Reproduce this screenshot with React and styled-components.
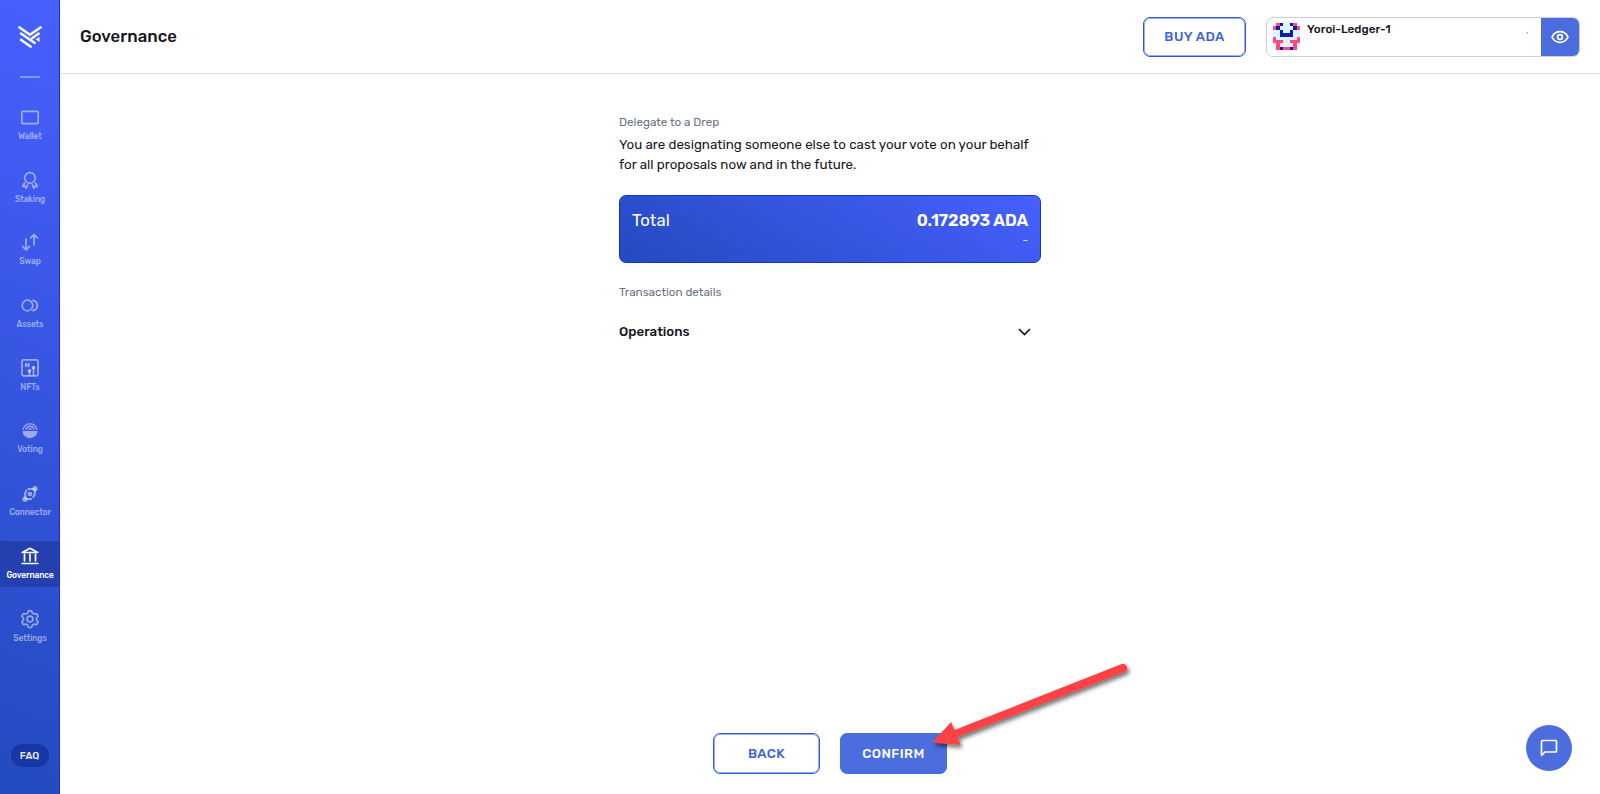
import React from 'react'
import styled, { createGlobalStyle, css } from 'styled-components'

const blue = '#4b6dde'
const outline = '#2f59d6'

const GlobalStyle = createGlobalStyle`
* {
  box-sizing: border-box;
}
body {
  margin: 0;
  background: #fff;
  color: #15161f;
  font-family: Rubik, Roboto, "Liberation Sans", sans-serif;
}
button {
  font-family: inherit;
  padding: 0;
  cursor: pointer;
}
h1, p {
  margin: 0;
}
svg {
  display: block;
}
`

const Layout = styled.div`
display: flex;
height: 794px;
overflow: hidden;
`

const Sidebar = styled.aside`
display: flex;
flex-direction: column;
align-items: center;
flex: none;
width: 60px;
padding: 24px 0 27px;
border-right: 1px solid #1230cf;
background: linear-gradient(20deg, #244abf 0%, #4760ff 100%);
`

const Divider = styled.div`
width: 20px;
height: 2px;
margin-top: 27px;
background: rgba(255, 255, 255, 0.36);
`

const NavList = styled.nav`
display: flex;
flex-direction: column;
gap: 16.2px;
width: 100%;
margin-top: 24px;
`

const NavItem = styled.a`
display: flex;
flex-direction: column;
align-items: center;
height: 46.5px;
padding: 5px 0 0 1px;
color: ${({ $active }) => ($active ? '#fff' : 'rgba(255, 255, 255, 0.5)')};
background: ${({ $active }) => ($active ? '#2340ae' : 'transparent')};
font-size: 8.33px;
font-weight: 500;
line-height: 10px;
letter-spacing: -0.1px;
white-space: nowrap;
svg {
  margin-bottom: 4px;
}
`

const FaqButton = styled.button`
width: 38px;
height: 23px;
margin-top: auto;
border: 0;
border-radius: 12px;
background: #1737a4;
color: #e8ecff;
font-size: 10px;
font-weight: 500;
`

const Page = styled.div`
display: flex;
flex-direction: column;
flex: 1;
`

const Header = styled.header`
display: flex;
align-items: center;
height: 74px;
padding: 0 20px;
border-bottom: 1px solid #dce0e9;
h1 {
  flex: 1;
  padding-bottom: 1px;
  font-size: 16.67px;
  font-weight: 500;
  letter-spacing: 0.05px;
}
`

const Button = styled.button`
width: ${({ $width }) => $width}px;
height: ${({ $height }) => $height}px;
border: 1px solid ${outline};
border-radius: 7px;
box-shadow: inset 0 0 0 1px rgba(75, 109, 222, 0.55);
background: #fff;
color: #3e64d8;
font-size: 13.33px;
font-weight: 500;
letter-spacing: 0.4px;
${({ $primary }) => $primary && css`
border-color: ${blue};
background: ${blue};
color: #fff;
`}
`

const WalletCard = styled.div`
display: flex;
width: 314px;
height: 40px;
margin-left: 20px;
border: 1px solid #cbd0dc;
border-radius: 7px;
overflow: hidden;
`

const WalletName = styled.div`
flex: 1;
padding: 4px 0 0 7px;
font-size: 11.67px;
font-weight: 500;
line-height: 15px;
`

const AvatarBox = styled.div`
margin: 5px 0 0 6px;
width: 27px;
height: 27px;
border-radius: 4px;
overflow: hidden;
`

const Dot = styled.span`
width: 2px;
height: 2px;
margin: 14px 13px 0 0;
background: #b5cbe6;
`

const EyeButton = styled.button`
display: flex;
align-items: center;
justify-content: center;
width: 38px;
border: 0;
background: ${blue};
color: #fff;
`

const Content = styled.main`
display: flex;
flex-direction: column;
flex: 1;
width: 422px;
margin-left: 559px;
padding-top: 40px;
`

const Caption = styled.p`
color: #6b7384;
font-size: 11.67px;
line-height: 16px;
`

const Description = styled.p`
margin-top: 5px;
font-size: 13.33px;
line-height: 20px;
white-space: nowrap;
`

const TotalCard = styled.div`
display: flex;
justify-content: space-between;
height: 68px;
margin: 20px 0 21px;
padding: 13px 12px 0;
border: 1px solid #0d37d4;
border-radius: 7px;
background: linear-gradient(30deg, #244abf 0%, #4760ff 100%);
color: #fff;
font-size: 16.67px;
line-height: 22px;
`

const Total = styled.span`
letter-spacing: 0.15px;
`

const Amount = styled.div`
text-align: right;
font-weight: 600;
letter-spacing: -0.12px;
small {
  display: block;
  font-size: 11.67px;
  font-weight: 400;
  line-height: 19px;
  opacity: 0.8;
}
`

const OperationsRow = styled.div`
display: flex;
align-items: center;
justify-content: space-between;
margin-top: 20px;
padding-right: 10px;
font-size: 13.33px;
font-weight: 500;
line-height: 24px;
`

const Actions = styled.div`
display: flex;
gap: 20px;
margin: auto 0 20px 94px;
`

const Arrow = styled.svg`
position: absolute;
left: 919px;
top: 650px;
pointer-events: none;
`

const ChatButton = styled.button`
position: absolute;
left: 1526px;
top: 725px;
display: flex;
align-items: center;
justify-content: center;
width: 46px;
height: 46px;
border: 0;
border-radius: 50%;
background: ${blue};
color: #fff;
`

const avatarRows = [
  '.pn..np.',
  'pn....np',
  '..n..n..',
  '..nnnn..',
  'p......p',
  'ppp..ppp',
  '.p....p.',
  '.pnppnp.',
]
const avatarColors = { p: '#ff4a7d', n: '#0b1fa8' }

const Avatar = () => (
  <AvatarBox>
    <svg width="27" height="27" viewBox="0 0 8 8" shapeRendering="crispEdges">
      <rect width="8" height="8" fill="#e1f2ff" />
      {avatarRows.map((row, y) => row.split('').map((cell, x) => (
        avatarColors[cell] && <rect key={`${x}-${y}`} x={x} y={y} width="1" height="1" fill={avatarColors[cell]} />
      )))}
    </svg>
  </AvatarBox>
)

const Logo = () => (
  <svg width="26" height="25" viewBox="0 0 26 25" fill="none" stroke="#fff" strokeWidth="2.4">
    <path d="M1.500 2.800 13 10.800 24.500 2.800M3.200 9l15.300 10.500M3.200 15.300l11.300 8M14.300 14.800 22.500 9" />
    <path d="m18.500 15.500 4-2.500v5z" fill="#fff" stroke="none" />
  </svg>
)

const Icon = ({ children }) => (
  <svg width="20" height="20" viewBox="0 0 20 20" fill="none" stroke="currentColor" strokeWidth="1.7" strokeLinecap="round" strokeLinejoin="round">
    {children}
  </svg>
)

const navItems = [
  { label: 'Wallet', icon: <rect x="1.800" y="4.300" width="16.400" height="12.400" rx="1" /> },
  {
    label: 'Staking',
    icon: <><circle cx="10" cy="8" r="5.300" /><path d="M4.500 13 2.700 16.500l2.300-.3 1.200 2 1.300-3.200M15.500 13l1.800 3.500-2.300-.3-1.200 2-1.300-3.200" /></>,
  },
  { label: 'Swap', icon: <path d="M6 7v10.500M2.500 14.300 6 17.800l3.500-3.500M14 13V2.500M10.500 6 14 2.500 17.500 6" /> },
  { label: 'Assets', icon: <><circle cx="7.500" cy="10.500" r="5.300" /><path d="M13 5.300a5.300 5.300 0 0 1 0 10.400" /></> },
  {
    label: 'NFTs',
    icon: <><rect x="2" y="1.800" width="16" height="16" rx="1.500" /><path d="M5.800 8.500V5.500l3 3V5.500M9.500 17v-4M13.500 17v-6.500" /><circle cx="9.500" cy="12.800" r="1" fill="currentColor" /><circle cx="13.500" cy="9.500" r="1" fill="currentColor" /></>,
  },
  {
    label: 'Voting',
    icon: <><path d="M3.200 9.200a7 7 0 0 1 13.600 0M6 9.200a4.200 4.200 0 0 1 8 0M8.800 9.200a1.300 1.300 0 0 1 2.400 0" strokeWidth="1.400" /><path d="M2.500 11h15a7.500 7.200 0 0 1-15 0z" fill="currentColor" stroke="none" /></>,
  },
  {
    label: 'Connector',
    icon: <><path d="M8.300 6h5M5.200 15V9.700l1.300-2.200M14.800 6v5.500l-1.500 2.500M6.500 16h4.700" strokeWidth="2" /><circle cx="10" cy="11" r="2.300" fill="currentColor" stroke="none" /><circle cx="15" cy="5.700" r="2.600" fill="currentColor" stroke="none" /><circle cx="5" cy="16.200" r="2.600" fill="currentColor" stroke="none" /></>,
  },
  {
    label: 'Governance',
    active: true,
    icon: <path d="M2.300 6.500 10 2.300l7.700 4.200zM4.500 8.300v6.500M10 8.300v6.500M15.500 8.300v6.500M2.200 17.500h15.600" />,
  },
  {
    label: 'Settings',
    icon: <><path d="M8.500 1.800h3l1 2.400 1.500.8 2.600-.4 1.500 2.600L16.500 9.200v1.800l1.600 2-1.500 2.600-2.600-.4-1.500.8-1 2.500h-3l-1-2.500-1.500-.8-2.600.4L1.900 13l1.600-2V9.200L1.900 7.200l1.500-2.600L6 5l1.500-.8z" /><circle cx="10" cy="10.100" r="2.900" /></>,
  },
]

export default function App() {
  return (
    <Layout>
      <GlobalStyle />
      <Sidebar>
        <Logo />
        <Divider />
        <NavList>
          {navItems.map(({ label, icon, active }) => (
            <NavItem key={label} $active={active}>
              <Icon>{icon}</Icon>
              {label}
            </NavItem>
          ))}
        </NavList>
        <FaqButton>FAQ</FaqButton>
      </Sidebar>
      <Page>
        <Header>
          <h1>Governance</h1>
          <Button $width={103} $height={40}>BUY ADA</Button>
          <WalletCard>
            <Avatar />
            <WalletName>Yoroi-Ledger-1</WalletName>
            <Dot />
            <EyeButton>
              <svg width="18" height="14" viewBox="0 0 18 14" fill="none" stroke="currentColor" strokeWidth="1.700">
                <path d="M1 7c1.600-3.500 4.500-5.300 8-5.300S15.400 3.500 17 7c-1.600 3.500-4.500 5.300-8 5.300S2.600 10.500 1 7z" />
                <circle cx="9" cy="7" r="2.400" />
              </svg>
            </EyeButton>
          </WalletCard>
        </Header>
        <Content>
          <Caption>Delegate to a Drep</Caption>
          <Description>
            You are designating someone else to cast your vote on your behalf
            <br />
            for all proposals now and in the future.
          </Description>
          <TotalCard>
            <Total>Total</Total>
            <Amount>
              0.172893 ADA
              <small>-</small>
            </Amount>
          </TotalCard>
          <Caption>Transaction details</Caption>
          <OperationsRow>
            Operations
            <svg width="13" height="8" viewBox="0 0 13 8" fill="none" stroke="currentColor" strokeWidth="1.700">
              <path d="m1 1 5.500 5.500L12 1" />
            </svg>
          </OperationsRow>
          <Actions>
            <Button $width={107} $height={41}>BACK</Button>
            <Button $width={107} $height={41} $primary>CONFIRM</Button>
          </Actions>
        </Content>
      </Page>
      <Arrow width="220" height="110" viewBox="0 0 220 110">
        <defs>
          <filter id="shadow" x="-10%" y="-20%" width="120%" height="150%">
            <feDropShadow dx="2" dy="3" stdDeviation="2" floodOpacity="0.55" />
          </filter>
        </defs>
        <g filter="url(#shadow)">
          <path d="M13.300 92.500 32 72l3.500 8L202 14.200a4 4 0 0 1 4 7.500L38.500 87l3 8z" fill="#fd4344" />
        </g>
      </Arrow>
      <ChatButton>
        <svg width="18" height="18" viewBox="0 0 18 18" fill="none" stroke="currentColor" strokeWidth="1.700" strokeLinejoin="round">
          <path d="M1.500 16.500V2.500q0-1 1-1h13q1 0 1 1v9.500q0 1-1 1H5z" />
        </svg>
      </ChatButton>
    </Layout>
  )
}
